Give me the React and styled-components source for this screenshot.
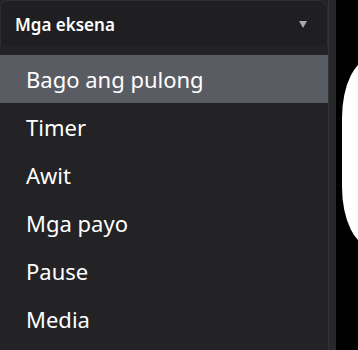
import React from 'react';
import styled, { createGlobalStyle } from 'styled-components';

const GlobalStyle = createGlobalStyle`
  html, body {
    margin: 0;
    padding: 0;
    background: #000;
    height: 100%;
    overflow: hidden;
  }
  #root {
    height: 100%;
  }
`;

const scenes = ['Bago ang pulong', 'Timer', 'Awit', 'Mga payo', 'Pause', 'Media'];

const App = () => {
  return (
    <>
      <GlobalStyle />
      <Page>
        <Sidebar>
          <Menu>
            <Header>
              <HeaderLabel>Mga eksena</HeaderLabel>
              <Caret />
            </Header>
            <List>
              {scenes.map((scene, i) => (
                <Item key={scene} $active={i === 0}>
                  {scene}
                </Item>
              ))}
            </List>
          </Menu>
          <ScrollStrip />
        </Sidebar>
        <Preview>
          <svg width="100%" height="100%" viewBox="0 0 22 350" preserveAspectRatio="xMinYMin slice">
            <rect x="6" y="58" width="120" height="189" rx="30" ry="60" fill="#fff" />
          </svg>
        </Preview>
      </Page>
    </>
  );
};

const Page = styled.div`
  display: flex;
  height: 350px;
  width: 358px;
  font-family: "Noto Sans", "Open Sans", sans-serif;
`;

const Sidebar = styled.div`
  display: flex;
  width: 336px;
  flex-shrink: 0;
  background: #232326;
`;

const Menu = styled.div`
  width: 328px;
  display: flex;
  flex-direction: column;
`;

const Header = styled.div`
  height: 46px;
  box-sizing: border-box;
  display: flex;
  align-items: center;
  justify-content: space-between;
  padding: 2px 20px 0 14px;
  background: #1f1f21;
  border: 1px solid #2e2e31;
  border-bottom: none;
  border-radius: 7px 10px 0 0;
`;

const HeaderLabel = styled.span`
  color: #fff;
  font-size: 17px;
  font-weight: 600;
`;

const Caret = styled.span`
  width: 0;
  height: 0;
  border-left: 4px solid transparent;
  border-right: 4px solid transparent;
  border-top: 7px solid #a9a9ad;
`;

const List = styled.div`
  display: flex;
  flex-direction: column;
  padding-top: 9px;
`;

const Item = styled.div`
  height: 48px;
  display: flex;
  align-items: center;
  padding-left: 26px;
  font-size: 22px;
  color: #fff;
  background: ${(p) => (p.$active ? '#5a5c63' : 'transparent')};
`;

const ScrollStrip = styled.div`
  width: 8px;
  box-sizing: border-box;
  border-left: 1px solid #333336;
  background: #28282b;
`;

const Preview = styled.div`
  flex: 1;
  background: #000;
  overflow: hidden;
`;

export default App;
